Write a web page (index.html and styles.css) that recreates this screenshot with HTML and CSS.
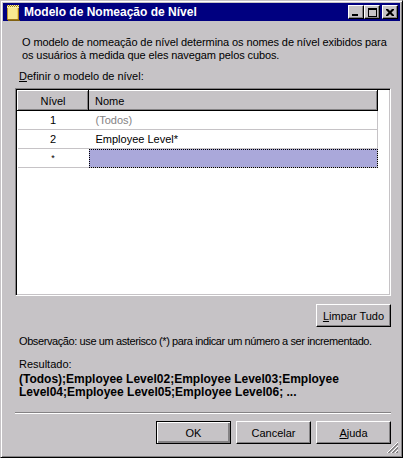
FILE: index.html
```html
<!DOCTYPE html>
<html lang="pt">
<head>
<meta charset="utf-8">
<title>Modelo de Nomeação de Nível</title>
<link rel="stylesheet" href="styles.css">
</head>
<body>
<div class="window">
  <div class="titlebar">
    <svg class="app-icon" width="14" height="16" viewBox="0 0 14 16">
      <rect x="1" y="0" width="12" height="3" fill="#f8f0a0"/>
      <path d="M1 0h1v1h-1zM3 0h1v1h-1zM5 0h1v1h-1zM7 0h1v1h-1zM9 0h1v1h-1zM11 0h1v1h-1zM2 1h1v1h-1zM4 1h1v1h-1zM6 1h1v1h-1zM8 1h1v1h-1zM10 1h1v1h-1zM12 1h1v1h-1z" fill="#a08020"/>
      <rect x="1" y="3" width="12" height="12" fill="#f0d060"/>
      <rect x="2" y="3" width="9" height="11" fill="#f8e890"/>
      <rect x="1" y="3" width="1" height="12" fill="#c09830"/>
      <rect x="12" y="3" width="1" height="12" fill="#a07818"/>
      <rect x="1" y="14" width="12" height="1" fill="#a07818"/>
      <rect x="2" y="15" width="12" height="1" fill="#806010"/>
    </svg>
    <span class="title">Modelo de Nomeação de Nível</span>
    <div class="caption-btns">
      <span class="cbtn"><svg width="8" height="7" viewBox="0 0 8 7"><rect x="0" y="5" width="6" height="2" fill="#000"/></svg></span>
      <span class="cbtn"><svg width="9" height="9" viewBox="0 0 9 9"><path d="M0 0h9v9h-9z M1 2v6h7v-6z" fill="#000" fill-rule="evenodd"/></svg></span>
      <span class="cbtn close"><svg width="8" height="7" viewBox="0 0 8 7"><path d="M0 0h2l2 2 2-2h2v1l-2.5 2.5 2.5 2.5v1h-2l-2-2-2 2h-2v-1l2.5-2.5-2.5-2.5z" fill="#000"/></svg></span>
    </div>
  </div>

  <div class="content">
    <p class="desc">O modelo de nomeação de nível determina os nomes de nível exibidos para os usuários à medida que eles navegam pelos cubos.</p>
    <p class="label"><u>D</u>efinir o modelo de nível:</p>

    <div class="grid">
      <table class="levels">
        <thead>
          <tr><th class="c-level">Nível</th><th class="c-name">Nome</th></tr>
        </thead>
        <tbody>
          <tr><td class="c-level">1</td><td class="c-name muted">(Todos)</td></tr>
          <tr><td class="c-level">2</td><td class="c-name">Employee Level*</td></tr>
          <tr><td class="c-level star">*</td><td class="c-name selected"></td></tr>
        </tbody>
      </table>
    </div>

    <div class="clear-row">
      <button class="btn"><u>L</u>impar Tudo</button>
    </div>

    <p class="note">Observação: use um asterisco (*) para indicar um número a ser incrementado.</p>
    <p class="result-label">Resultado:</p>
    <p class="result">(Todos);Employee Level02;Employee Level03;Employee Level04;Employee Level05;Employee Level06; ...</p>

    <div class="separator"></div>

    <div class="actions">
      <button class="btn default">OK</button>
      <button class="btn">Cancelar</button>
      <button class="btn"><u>A</u>juda</button>
    </div>
  </div>

  <svg class="grip" width="13" height="13" viewBox="0 0 13 13">
    <path d="M12 1L1 12M12 5L5 12M12 9L9 12" stroke="#fff" stroke-width="1"/>
    <path d="M12 2L2 12M12 3L3 12M12 6L6 12M12 7L7 12M12 10L10 12M12 11L11 12" stroke="#848284" stroke-width="1"/>
  </svg>
</div>
</body>
</html>
```

FILE: styles.css
```css
* { box-sizing: border-box; }

html, body {
  margin: 0;
  padding: 0;
  background: #c6c3c6;
}

body {
  font-family: "Liberation Sans", Arial, sans-serif;
  font-size: 11px;
  color: #000;
}

.window {
  position: relative;
  width: 403px;
  height: 458px;
  background: #c6c3c6;
  border: 1px solid;
  border-color: #c6c3c6 #000 #000 #c6c3c6;
  box-shadow: inset 1px 1px 0 #fff, inset -1px -1px 0 #848284;
  padding: 2px;
  display: flex;
  flex-direction: column;
}

/* title bar */
.titlebar {
  height: 18px;
  background: #000080;
  display: flex;
  align-items: center;
  padding: 0 2px 0 3px;
}

.app-icon {
  flex: none;
  margin-top: 1px;
}

.title {
  color: #fff;
  font-weight: bold;
  font-size: 12px;
  margin-left: 4px;
  flex: 1;
  white-space: nowrap;
}

.caption-btns {
  display: flex;
  align-items: center;
}

.cbtn {
  width: 16px;
  height: 14px;
  background: #c6c3c6;
  border: 1px solid;
  border-color: #fff #000 #000 #fff;
  box-shadow: inset -1px -1px 0 #848284;
  display: flex;
  align-items: center;
  justify-content: center;
}

.cbtn svg { display: block; }
.cbtn.close { margin-left: 2px; }

/* content */
.content {
  flex: 1;
  display: flex;
  flex-direction: column;
  padding: 0 9px 0 12px;
}

p { margin: 0; line-height: 13px; }

.desc {
  margin-top: 15px;
  margin-right: -6px;
  padding: 0 0 0 7px;
  letter-spacing: -0.1px;
}

.label {
  margin-top: 8px;
  padding-left: 4px;
}

.grid {
  margin-top: 5px;
  height: 208px;
  background: #fff;
  border: 1px solid;
  border-color: #848284 #fff #fff #848284;
  box-shadow: inset 1px 1px 0 #000, inset -1px -1px 0 #c6c3c6;
  padding: 1px;
}

.levels {
  border-collapse: collapse;
  table-layout: fixed;
  width: 361px;
}

.levels th {
  height: 20px;
  padding: 0;
  font-weight: normal;
  background: #c6c3c6;
  border-top: 1px solid #fff;
  border-left: 1px solid #fff;
  border-right: 1px solid #000;
  border-bottom: 1px solid #000;
  box-shadow: inset -1px -1px 0 #848284;
}

.levels th.c-level { width: 71px; text-align: center; }
.levels th.c-name { text-align: left; padding-left: 6px; }

.levels td {
  height: 19px;
  padding: 0;
  border-bottom: 1px solid #c6c3c6;
}

.levels td.c-level { text-align: center; }
.levels td.c-name {
  padding-left: 7px;
  border-right: 1px solid #c6c3c6;
}

.levels td.muted { color: #848284; }
.levels td.star { font-size: 9px; vertical-align: top; padding-top: 4px; }

.levels td.selected {
  background: #aaa8da;
  outline: 1px dotted #000;
  outline-offset: -1px;
}

.clear-row {
  margin-top: 8px;
  display: flex;
  justify-content: flex-end;
}

.btn {
  width: 75px;
  height: 23px;
  padding: 0;
  font-family: "Liberation Sans", Arial, sans-serif;
  font-size: 11px;
  color: #000;
  background: #c6c3c6;
  border: 1px solid;
  border-color: #fff #000 #000 #fff;
  box-shadow: inset -1px -1px 0 #848284;
}

.btn.default {
  border: 1px solid #000;
  box-shadow: inset 1px 1px 0 #fff, inset -2px -2px 0 #848284, inset -1px -1px 0 #000;
}

.note {
  margin-top: 8px;
  margin-right: -8px;
  padding-left: 4px;
  letter-spacing: -0.4px;
  white-space: nowrap;
}

.result-label {
  margin-top: 10px;
  padding-left: 4px;
}

.result {
  margin-top: 2px;
  padding: 0 20px 0 4px;
  font-weight: bold;
  font-size: 12px;
  line-height: 13px;
}

.separator {
  margin-top: auto;
  height: 2px;
  border-top: 1px solid #848284;
  border-bottom: 1px solid #fff;
}

.actions {
  margin-top: 7px;
  margin-bottom: 11px;
  display: flex;
  justify-content: flex-end;
  gap: 5px;
}

.grip {
  position: absolute;
  right: 3px;
  bottom: 3px;
}
```
